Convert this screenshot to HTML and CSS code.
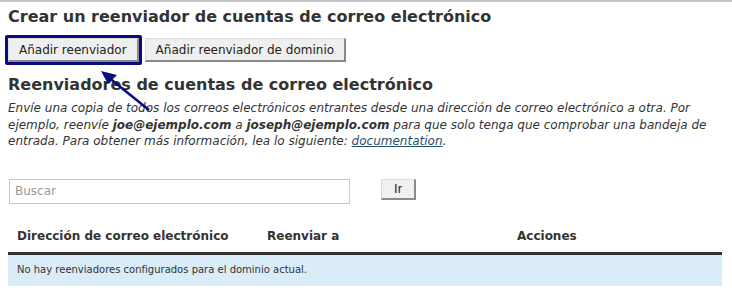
FILE: index.html
```html
<!DOCTYPE html>
<html lang="es">
<head>
<meta charset="utf-8">
<link rel="stylesheet" href="styles.css">
</head>
<body>
<div class="page">
  <h2 class="title">Crear un reenviador de cuentas de correo electrónico</h2>
  <div class="actions">
    <span class="highlight"><button class="btn">Añadir reenviador</button></span>
    <button class="btn">Añadir reenviador de dominio</button>
  </div>
  <h2 class="title title2">Reenviadores de cuentas de correo electrónico</h2>
  <p class="desc">Envíe una copia de todos los correos electrónicos entrantes desde una dirección de correo electrónico a otra. Por ejemplo, reenvíe <b>joe@ejemplo.com</b> a <b>joseph@ejemplo.com</b> para que solo tenga que comprobar una bandeja de entrada. Para obtener más información, lea lo siguiente: <a href="#">documentation</a>.</p>
  <div class="search">
    <input class="search-input" type="text" placeholder="Buscar">
    <button class="btn btn-go">Ir</button>
  </div>
  <table class="grid">
    <thead>
      <tr><th class="c1">Dirección de correo electrónico</th><th class="c2">Reenviar a</th><th class="c3">Acciones</th></tr>
    </thead>
    <tbody>
      <tr class="empty"><td colspan="3">No hay reenviadores configurados para el dominio actual.</td></tr>
    </tbody>
  </table>
  <svg class="arrow" width="60" height="50" viewBox="0 0 60 50">
    <line x1="51" y1="45" x2="10" y2="12" stroke="#0b0b80" stroke-width="2.5"/>
    <polygon points="3,6 19,10 10,19" fill="#0b0b80"/>
  </svg>
</div>
</body>
</html>
```
FILE: styles.css
```css
html, body { margin: 0; padding: 0; background: #fff; }
body { font-family: "DejaVu Sans", Verdana, sans-serif; color: #333; }
.page {
  position: relative;
  border-top: 2px solid #c4c4c4;
  padding: 0 10px 0 8px;
}
.title {
  margin: 5px 0 0;
  font-size: 16px;
  font-weight: bold;
  line-height: 20px;
  color: #333;
}
.title2 { margin-top: 10px; font-size: 16px; }
.actions {
  display: flex;
  align-items: center;
  gap: 3px;
  margin-top: 8px;
  margin-left: -3px;
}
.highlight {
  display: inline-flex;
  border: 3px solid #0b0b80;
  border-radius: 2px;
}
.btn {
  font-family: "DejaVu Sans", Verdana, sans-serif;
  font-size: 12px;
  color: #222;
  background: #efefef;
  border: 1px solid #dcdcdc;
  border-right: 2px solid #8a8a8a;
  border-bottom: 2px solid #8a8a8a;
  padding: 3px 10px 2px;
  line-height: 16px;
  margin: 0;
}
.desc {
  margin: 5px 0 0;
  font-size: 12px;
  font-style: italic;
  line-height: 16.5px;
}
.desc b { font-weight: bold; }
.desc a { color: #1f4f6f; }
.search {
  display: flex;
  align-items: flex-start;
  gap: 31px;
  margin-top: 29px;
  padding-left: 1px;
}
.search-input {
  width: 341px;
  height: 25px;
  box-sizing: border-box;
  border: 1px solid #c8c8c8;
  padding: 0 5px;
  font-family: "DejaVu Sans", Verdana, sans-serif;
  font-size: 12px;
  margin: 0;
}
.search-input::placeholder { color: #999; }
.btn-go {
  font-family: "Liberation Sans", Arial, sans-serif;
  font-size: 13px;
  width: 35px;
  padding: 1px 0 1px;
  text-align: center;
  background: #f0f0f0;
}
.grid {
  width: 714px;
  margin-top: 19px;
  border-collapse: collapse;
  table-layout: fixed;
}
.grid th {
  text-align: left;
  font-size: 12px;
  font-weight: bold;
  color: #333;
  padding: 6px 9px 9px;
  border-bottom: 3px solid #333;
}
.grid .c1, .grid .c2 { width: 232px; }
.empty td {
  background: #d9ecf8;
  font-size: 10px;
  padding: 9px 9px 10px;
  line-height: 12px;
}
.arrow {
  position: absolute;
  left: 98px;
  top: 63px;
}
```
